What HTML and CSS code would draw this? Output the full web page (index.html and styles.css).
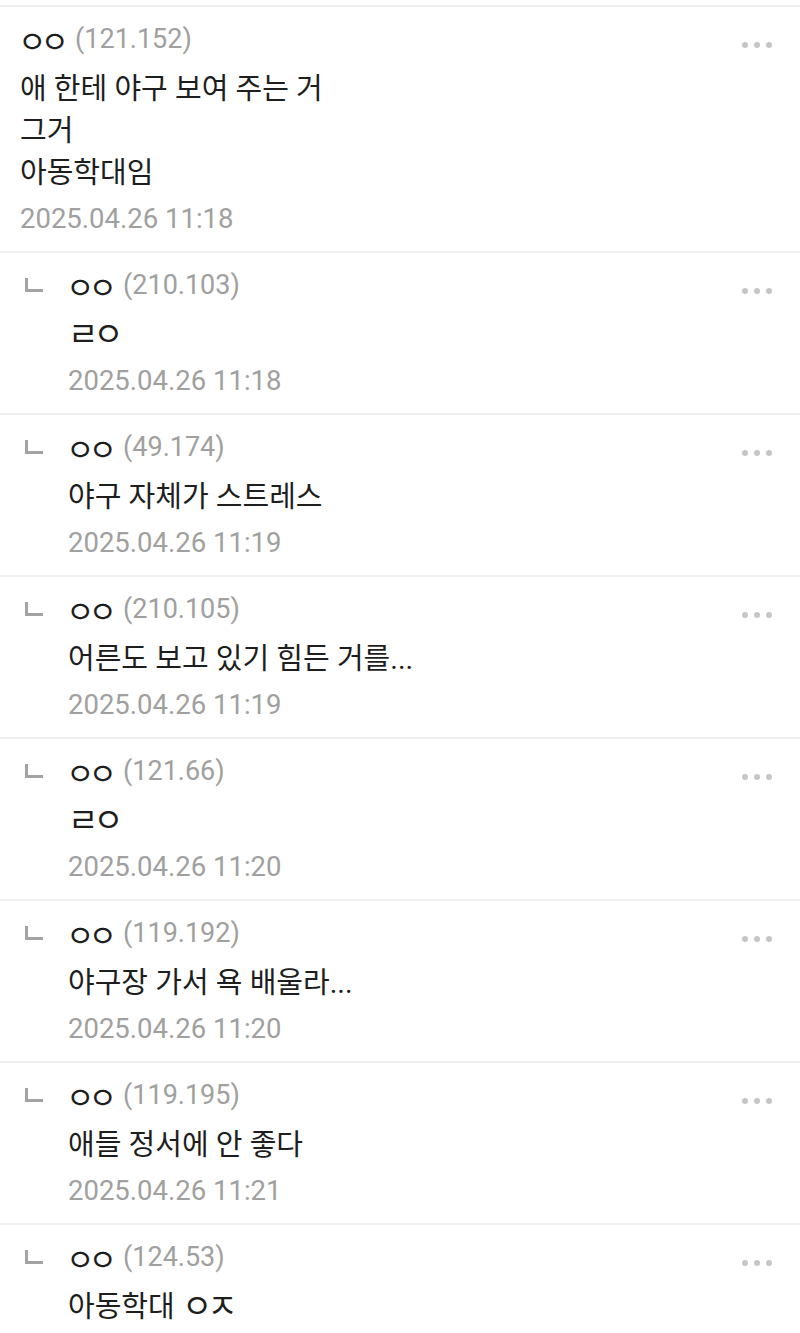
FILE: index.html
```html
<!DOCTYPE html>
<html lang="ko">

<head>
    <meta charset="UTF-8">
    <meta name="viewport" content="width=device-width, initial-scale=1.0">
    <title>댓글</title>
    <link rel="stylesheet" href="styles.css">
</head>

<body>
    <div class="list">
        <div class="comment">
            <div class="body">
                <div class="head"><span class="nick">ㅇㅇ</span><span class="ip">(121.152)</span><span class="more"><i></i><i></i><i></i></span></div>
                <div class="text">애 한테 야구 보여 주는 거<br>그거<br>아동학대임</div>
                <div class="date">2025.04.26 11:18</div>
            </div>
        </div>

        <div class="comment reply">
            <span class="mark"></span>
            <div class="body">
                <div class="head"><span class="nick">ㅇㅇ</span><span class="ip">(210.103)</span><span class="more"><i></i><i></i><i></i></span></div>
                <div class="text"><span class="jamo">ㄹㅇ</span></div>
                <div class="date">2025.04.26 11:18</div>
            </div>
        </div>

        <div class="comment reply">
            <span class="mark"></span>
            <div class="body">
                <div class="head"><span class="nick">ㅇㅇ</span><span class="ip">(49.174)</span><span class="more"><i></i><i></i><i></i></span></div>
                <div class="text">야구 자체가 스트레스</div>
                <div class="date">2025.04.26 11:19</div>
            </div>
        </div>

        <div class="comment reply">
            <span class="mark"></span>
            <div class="body">
                <div class="head"><span class="nick">ㅇㅇ</span><span class="ip">(210.105)</span><span class="more"><i></i><i></i><i></i></span></div>
                <div class="text">어른도 보고 있기 힘든 거를...</div>
                <div class="date">2025.04.26 11:19</div>
            </div>
        </div>

        <div class="comment reply">
            <span class="mark"></span>
            <div class="body">
                <div class="head"><span class="nick">ㅇㅇ</span><span class="ip">(121.66)</span><span class="more"><i></i><i></i><i></i></span></div>
                <div class="text"><span class="jamo">ㄹㅇ</span></div>
                <div class="date">2025.04.26 11:20</div>
            </div>
        </div>

        <div class="comment reply">
            <span class="mark"></span>
            <div class="body">
                <div class="head"><span class="nick">ㅇㅇ</span><span class="ip">(119.192)</span><span class="more"><i></i><i></i><i></i></span></div>
                <div class="text">야구장 가서 욕 배울라...</div>
                <div class="date">2025.04.26 11:20</div>
            </div>
        </div>

        <div class="comment reply">
            <span class="mark"></span>
            <div class="body">
                <div class="head"><span class="nick">ㅇㅇ</span><span class="ip">(119.195)</span><span class="more"><i></i><i></i><i></i></span></div>
                <div class="text">애들 정서에 안 좋다</div>
                <div class="date">2025.04.26 11:21</div>
            </div>
        </div>

        <div class="comment reply">
            <span class="mark"></span>
            <div class="body">
                <div class="head"><span class="nick">ㅇㅇ</span><span class="ip">(124.53)</span><span class="more"><i></i><i></i><i></i></span></div>
                <div class="text">아동학대 <span class="jamo">ㅇㅈ</span></div>
            </div>
        </div>
    </div>
</body>

</html>
```

FILE: styles.css
```css
body {
    margin: 0;
    background: #fff;
    font-family: Roboto, "Noto Sans CJK KR", sans-serif;
    color: #1e1e1e;
}

.list {
    padding-top: 5px;
}

.comment {
    display: flex;
    border-top: 2px solid #f1f1f1;
    padding: 8px 28px 8px 20px;
}

.reply .mark {
    flex: 0 0 auto;
    box-sizing: border-box;
    width: 18px;
    height: 14px;
    margin: 17px 25px 0 5px;
    border-left: 3px solid #a3a3a3;
    border-bottom: 3px solid #a3a3a3;
}

.body {
    flex: 1;
}

.head {
    display: flex;
    align-items: center;
    height: 48px;
    font-size: 27px;
}

.nick {
    color: #1e1e1e;
    font-size: 31px;
    letter-spacing: -6px;
    margin-left: -2px;
}

.ip {
    color: #a0a0a0;
    margin-left: 12px;
}

.more {
    margin-left: auto;
    margin-top: 12px;
    display: flex;
    gap: 6px;
}

.more i {
    width: 6px;
    height: 6px;
    border-radius: 50%;
    background: #c6c6c6;
}

.text {
    font-size: 29px;
    line-height: 42px;
    padding: 5px 0 1px;
}

.jamo {
    font-size: 33px;
    letter-spacing: -5px;
    vertical-align: top;
}

.date {
    font-size: 27.5px;
    line-height: 48px;
    color: #a0a0a0;
}
```
